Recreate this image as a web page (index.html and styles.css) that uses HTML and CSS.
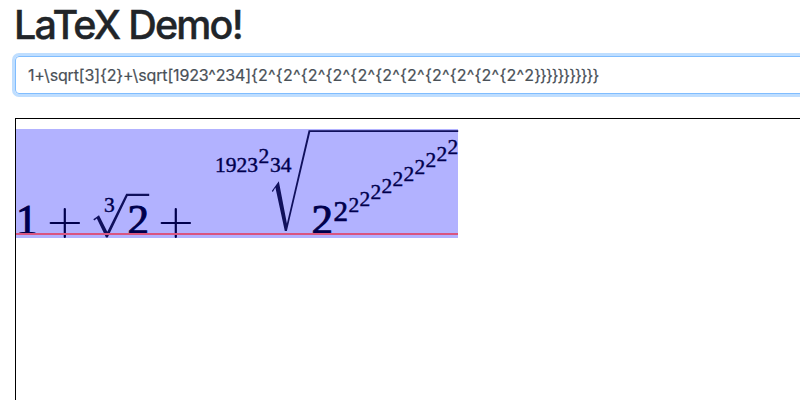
FILE: index.html
```
<!DOCTYPE html>
<html lang="en">
<head>
<meta charset="utf-8">
<title>LaTeX Demo!</title>
<link rel="stylesheet" href="styles.css">
</head>
<body>
<main class="page">
  <h1 class="title">LaTeX Demo!</h1>
  <div class="field">1+\sqrt[3]{2}+\sqrt[1923^234]<span class="powers">{2^{2^{2^{2^{2^{2^{2^{2^{2^{2^{2^2</span><span class="braces">}}}}}}}}}}}</span></div>
  <div class="board">
    <svg class="formula" width="443" height="110" viewBox="16 129 443 110">
      <rect class="bounds" x="16" y="129" width="442" height="109"/>
      <g class="large">
        <text x="16" y="233.5">1</text>
        <text x="127.5" y="233.5">2</text>
        <text x="311.5" y="233.5">2</text>
      </g>
      <text class="medium" x="333.6" y="221">2</text>
      <g class="small">
        <text x="104" y="211.5">3</text>
        <text x="215" y="171.7">1923</text>
        <text x="258.5" y="162.5">2</text>
        <text x="270" y="171.7">34</text>
        <text x="348.6" y="212">2</text>
        <text x="359.5" y="206">2</text>
        <text x="370.5" y="199.3">2</text>
        <text x="381.4" y="193">2</text>
        <text x="392.4" y="186.3">2</text>
        <text x="403.4" y="180.5">2</text>
        <text x="414.4" y="173.5">2</text>
        <text x="425.4" y="167.3">2</text>
        <text x="436.4" y="160.5">2</text>
        <text x="447.4" y="154.3">2</text>
      </g>
      <path class="plus" d="M50.7 223H79M64.8 209V237M161.7 223H190M175.8 209V237"/>
      <path class="ink" d="M93.3 219.2L99 215.3L107.3 231.8L126.2 193.8H149.2V195.9H127.6L107.7 237.5H106L96.8 218.4L94.3 220.5Z"/>
      <path class="ink" d="M271.8 191L278.8 181.3L286.9 223.5L308.6 130.3H458.2V132.1H310.2L286.9 231H284.8L275.4 187.5L272.8 192Z"/>
      <path class="baseline" d="M16 234H458"/>
    </svg>
  </div>
</main>
</body>
</html>
```
FILE: styles.css
```
* { box-sizing: border-box; }
body {
  margin: 0;
  background: #fff;
  color: #212529;
  font-family: Inter, "Liberation Sans", sans-serif;
  overflow: hidden;
}
.page { padding: 1px 0 0 15px; width: 830px; }
.title {
  margin: 0 0 7px -1px;
  font-size: 39.5px;
  font-weight: 500;
  -webkit-text-stroke: 0.4px #212529;
  line-height: 48px;
  letter-spacing: -1.8px;
}
.field {
  height: 38px;
  padding: 6px 12px;
  border: 1px solid #80bdff;
  border-radius: 4px;
  box-shadow: 0 0 0 3px #bfdeff;
  color: #495057;
  font-size: 16px;
  -webkit-text-stroke: 0.2px #495057;
  line-height: 25px;
  letter-spacing: -0.14px;
  white-space: nowrap;
}
.powers { letter-spacing: 0.24px; }
.braces { letter-spacing: -1px; }
.board {
  height: 300px;
  margin-top: 24px;
  padding-top: 10px;
  border: 1px solid #000;
}
.formula { display: block; overflow: visible; }
.bounds { fill: #b2b2ff; }
.large, .medium, .small {
  fill: #00004d;
  stroke: #00004d;
  font-family: "Liberation Serif", serif;
}
.large { font-size: 43px; stroke-width: 1px; }
.medium { font-size: 29px; stroke-width: 0.7px; }
.small { font-size: 21.5px; stroke-width: 0.4px; }
.plus { fill: none; stroke: #00004d; stroke-width: 2.2px; stroke-linecap: round; }
.ink { fill: #10105c; }
.baseline { stroke: #d95580; stroke-width: 2px; }
```
